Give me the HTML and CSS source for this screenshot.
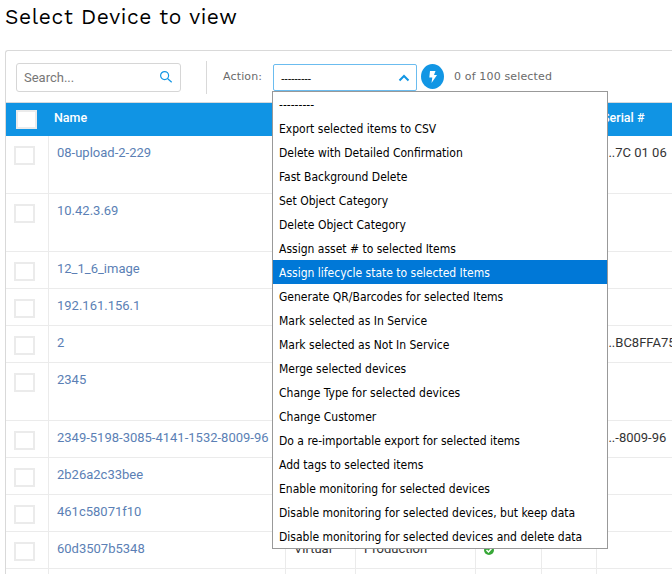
FILE: index.html
```html
<!DOCTYPE html>
<html lang="en">
<head>
<meta charset="utf-8">
<title>Select Device to view</title>
<link rel="stylesheet" href="styles.css">
</head>
<body>
<h1>Select Device to view</h1>
<main class="panel">
  <div class="toolbar">
    <div class="search"><span>Search...</span>
      <svg width="14" height="14" viewBox="0 0 14 14" fill="none" stroke="#1296e4" stroke-width="1.2"><circle cx="5.6" cy="5.6" r="4"/><path d="M8.500 8.500l4.200 3.800"/></svg>
    </div>
    <div class="divider"></div>
    <span class="label">Action:</span>
    <div class="select"><span>---------</span>
      <svg width="12" height="8" viewBox="0 0 12 8" fill="none" stroke="#1296e4" stroke-width="2"><path d="M1.500 6.500L6 2l4.500 4.500"/></svg>
      <ul class="menu">
        <li>---------</li>
        <li>Export selected items to CSV</li>
        <li>Delete with Detailed Confirmation</li>
        <li>Fast Background Delete</li>
        <li>Set Object Category</li>
        <li>Delete Object Category</li>
        <li>Assign asset # to selected Items</li>
        <li class="active">Assign lifecycle state to selected Items</li>
        <li>Generate QR/Barcodes for selected Items</li>
        <li>Mark selected as In Service</li>
        <li>Mark selected as Not In Service</li>
        <li>Merge selected devices</li>
        <li>Change Type for selected devices</li>
        <li>Change Customer</li>
        <li>Do a re-importable export for selected items</li>
        <li>Add tags to selected items</li>
        <li>Enable monitoring for selected devices</li>
        <li>Disable monitoring for selected devices, but keep data</li>
        <li>Disable monitoring for selected devices and delete data</li>
      </ul>
    </div>
    <div class="go"><svg width="23" height="25" viewBox="0 0 23 25"><path d="M9 7h5.500l-1.500 4h3l-5.500 8 .8-5.500H8.300z" fill="#fff"/></svg></div>
    <span class="count">0 of 100 selected</span>
  </div>
  <div class="row head"><div><i class="box"></i></div><div>Name</div><div></div><div></div><div></div><div></div><div class="serial">Serial #</div></div>
  <div class="row tall"><div><i class="box"></i></div><div><a>08-upload-2-229</a></div><div></div><div></div><div></div><div></div><div>...7C 01 06</div></div>
  <div class="row tall"><div><i class="box"></i></div><div><a>10.42.3.69</a></div><div></div><div></div><div></div><div></div><div></div></div>
  <div class="row"><div><i class="box"></i></div><div><a>12_1_6_image</a></div><div></div><div></div><div></div><div></div><div></div></div>
  <div class="row"><div><i class="box"></i></div><div><a>192.161.156.1</a></div><div></div><div></div><div></div><div></div><div></div></div>
  <div class="row"><div><i class="box"></i></div><div><a>2</a></div><div></div><div></div><div></div><div></div><div>...BC8FFA75</div></div>
  <div class="row tall"><div><i class="box"></i></div><div><a>2345</a></div><div></div><div></div><div></div><div></div><div></div></div>
  <div class="row"><div><i class="box"></i></div><div><a>2349-5198-3085-4141-1532-8009-96</a></div><div></div><div></div><div></div><div></div><div>...-8009-96</div></div>
  <div class="row"><div><i class="box"></i></div><div><a>2b26a2c33bee</a></div><div></div><div></div><div></div><div></div><div></div></div>
  <div class="row"><div><i class="box"></i></div><div><a>461c58071f10</a></div><div></div><div></div><div></div><div></div><div></div></div>
  <div class="row"><div><i class="box"></i></div><div><a>60d3507b5348</a></div><div>Virtual</div><div>Production</div><div><svg class="ok" width="10" height="10" viewBox="0 0 10 10"><circle cx="5" cy="5" r="5" fill="#38a838"/><path d="M2.500 5l2 2 3.500-4" fill="none" stroke="#fff" stroke-width="1.500"/></svg></div><div></div><div></div></div>
  <div class="row last"><div></div><div></div><div></div><div></div><div></div><div></div><div></div></div>
</main>
</body>
</html>
```
FILE: styles.css
```css
* { box-sizing: border-box; }
body { margin: 0; height: 574px; overflow: hidden; background: #fff; font-family: Roboto, sans-serif; font-size: 13px; }
h1 { margin: 0; height: 50px; padding: 3px 0 0 5px; font: 400 21px/28px "Work Sans", Inter, sans-serif; letter-spacing: 0.6px; color: #000; white-space: nowrap; }
.panel { margin-left: 5px; width: 667px; border: 1px solid #d9d9d9; border-width: 1px 0 0 1px; border-radius: 3px 0 0 0; }
.toolbar { display: flex; align-items: flex-start; height: 52px; padding: 12px 0 0 10px; border-bottom: 1px solid #d5d9dc; }
.search { display: flex; justify-content: space-between; width: 165px; height: 29px; padding: 7px 7px 0 7px; border: 1px solid #d6d6d6; border-radius: 3px; color: #777; line-height: 14px; }
.search svg { margin-top: -1px; }
.divider { width: 1px; height: 33px; margin: -2px 16px 0 25px; background: #d9d9d9; }
.label, .count { font: 11px/14px "DejaVu Sans", sans-serif; letter-spacing: 0.150px; color: #6a6a6a; padding-top: 7px; white-space: nowrap; }
.label { width: 50px; }
.select { position: relative; display: flex; justify-content: space-between; width: 144px; height: 27px; margin-top: 1px; padding: 6px 6px 0 7px; border: 1px solid #6bbcef; border-radius: 2px; font: 11px/14px "Liberation Sans", sans-serif; color: #000; letter-spacing: -0.350px; }
.select > svg { margin-top: 3px; }
.menu { position: absolute; z-index: 2; left: -2px; top: 26px; width: 336px; height: 458px; margin: 0; padding: 0; border: 1px solid #999; background: #fff; list-style: none; font: 12px/24px "DejaVu Sans Condensed", "DejaVu Sans", sans-serif; letter-spacing: 0; white-space: nowrap; }
.menu li { height: 24px; padding-left: 6px; line-height: 26px; }
.menu .active { background: #0078d7; color: #fff; }
.go { width: 23px; height: 25px; margin: 1px 0 0 4px; border-radius: 50%; background: #1296e4; }
.count { margin-left: 10px; }
.row { display: grid; grid-template-columns: 43px 237px 70px 120px 66px 55px 1fr; height: 37px; color: #333; line-height: 16px; }
.row > div { padding: 9px 0 0 8px; border-right: 1px solid #ebebeb; border-bottom: 1px solid #ebebeb; white-space: nowrap; overflow: hidden; }
.row > div:last-child { border-right: 0; }
.row a { color: #5b7fb5; }
.tall { height: 58px; }
.last { height: 5px; }
.last > div { padding: 0; border-bottom: 0; }
.head { height: 33px; background: #1094e4; color: #fff; font-weight: 500; font-size: 12.500px; }
.row.head > div { border: 0; padding: 7px 0 0 5px; }
.row.head > div:first-child { padding: 7px 0 0 10px; }
.box { display: block; width: 21px; height: 19px; margin-top: 1px; border: 2px solid #ebebeb; background: #fff; }
.head .box { margin: 0; }
.ok { display: block; margin: 4px 0 0 0; }
```
